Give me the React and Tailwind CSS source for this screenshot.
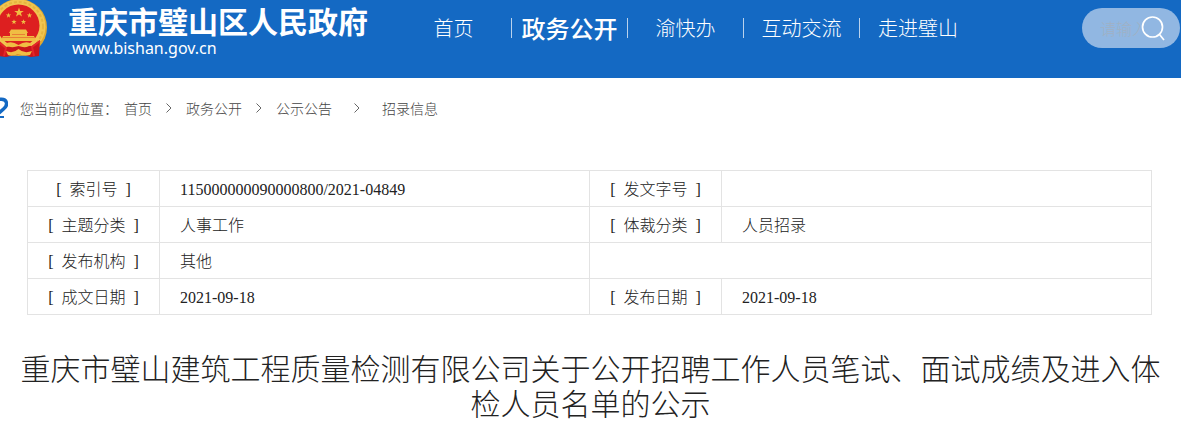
import { Fragment } from "react";

const NAV_ITEMS = ["首页", "政务公开", "渝快办", "互动交流", "走进璧山"];
const ACTIVE_ITEM = "政务公开";
const CRUMBS = ["首页", "政务公开", "公示公告", "招录信息"];

const INFO_ROWS = [
  ["索引号", "115000000090000800/2021-04849", "发文字号", ""],
  ["主题分类", "人事工作", "体裁分类", "人员招录"],
  ["发布机构", "其他", null, null],
  ["成文日期", "2021-09-18", "发布日期", "2021-09-18"],
];

const STAR = "M0-5 1.2-1.6 4.8-1.6 1.9.6 3 4 0 1.9-3 4-1.9.6-4.8-1.6-1.2-1.6Z";

function Emblem() {
  return (
    <svg viewBox="0 0 48 60" className="h-[60px] w-12 shrink-0" aria-hidden="true">
      <circle cx="18.500" cy="27.500" r="28.500" fill="#dfaa30" />
      <circle cx="18.500" cy="26.500" r="27" fill="#f0c550" />
      <circle cx="18.500" cy="26.500" r="24.500" fill="none" stroke="#e5b53f" strokeWidth="2" strokeDasharray="3 2" />
      <path d="M-1 41 6 47 19 45 32 46 40 40 39 56 31 57 19 54 6 57-1 56Z" fill="#c9151b" />
      <circle cx="18.500" cy="25.500" r="21" fill="#dd1f20" />
      <g fill="#f0bd43">
        <path d={STAR} transform="translate(19 12.500)" />
        <path d={STAR} transform="translate(8.500 15.500) scale(.55)" />
        <path d={STAR} transform="translate(29.500 15.500) scale(.55)" />
        <path d={STAR} transform="translate(14 22) scale(.55)" />
        <path d={STAR} transform="translate(23.500 22) scale(.55)" />
        <path d="M11 29.500H26L28 33H9ZM10 33H27V36H34L36 41H1L3 36H10Z" />
        <path d="M5 44Q11 40 18.500 45 26 40 32 44 27 49 18.500 46 10 49 5 44Z" />
        <path d="M6 51Q13 54 18.500 49 24 54 32 51L30 55Q24 57 18.500 54 12 57 8 55Z" />
      </g>
      <path d="M3 37.500H34M12 34.500H25" stroke="#dd1f20" strokeWidth=".4" />
      <path d="M-1 42 6 48 4 56M40 41 32 47 34 56" fill="none" stroke="#e3262a" strokeWidth="2" />
    </svg>
  );
}

function Header() {
  return (
    <header className="flex h-[78px] items-start bg-[#1469c3] text-white">
      <a href="#" className="flex shrink-0">
        <Emblem />
        <span className="ml-5 flex flex-col pt-1">
          <span className="text-[30px] leading-8 font-bold">重庆市璧山区人民政府</span>
          <span className="pl-1 font-['Noto_Sans','Open_Sans',sans-serif] text-base leading-6">www.bishan.gov.cn</span>
        </span>
      </a>
      <nav className="ml-7 flex shrink-0 pt-[18px]">
        {NAV_ITEMS.map((item) => (
          <a
            key={item}
            href="#"
            className={`flex h-5 w-29 items-center justify-center border-r border-white/70 last:border-r-0 ${
              item === ACTIVE_ITEM ? "text-2xl font-medium" : "text-xl font-light"
            }`}
          >
            {item}
          </a>
        ))}
      </nav>
      <form className="mt-2 mr-px ml-auto flex h-10 w-[98px] items-center rounded-full bg-[#91b7e2] pr-[14px] pl-[18px]">
        <input
          type="text"
          aria-label="请输入关键字"
          placeholder="请输入关键字"
          className="w-10 min-w-0 text-base font-light outline-none placeholder:text-[#a0b1c4]"
        />
        <button type="button" aria-label="搜索" className="shrink-0">
          <svg viewBox="0 0 26 26" className="size-[26px]" fill="none" stroke="white" strokeWidth="1.7">
            <circle cx="12.500" cy="12" r="10" />
            <path d="M19.500 19.500 24 25" />
          </svg>
        </button>
      </form>
    </header>
  );
}

function Breadcrumb() {
  return (
    <nav className="flex h-[60px] items-center text-sm font-light text-[#444]">
      <svg viewBox="0 0 8 22" className="h-[22px] w-2 shrink-0" fill="none" stroke="#1469c3">
        <path d="M-1 2.500C7.500 1 8.500 8 3.500 12L-1 16" strokeWidth="3.500" />
        <path d="M-1 20H4" strokeWidth="2" />
      </svg>
      <span className="mr-1.5 ml-3">您当前的位置：</span>
      {CRUMBS.map((crumb, index) => (
        <Fragment key={crumb}>
          {index > 0 && (
            <svg
              viewBox="0 0 6 10"
              className={index === 3 ? "mx-[22px] h-2.5 w-1.5" : "mx-[14px] h-2.5 w-1.5"}
              fill="none"
              stroke="#666"
            >
              <path d="M.5.5 5 5 .5 9.500" />
            </svg>
          )}
          <a href="#">{crumb}</a>
        </Fragment>
      ))}
    </nav>
  );
}

function Label({ children }) {
  return (
    <th scope="row" className="border border-[#e3e3e3] px-0 pt-0.5 pb-0 text-center font-light">
      <span className="flex justify-center gap-2">
        <span>[</span>
        <span>{children}</span>
        <span>]</span>
      </span>
    </th>
  );
}

function Value({ children }) {
  return <td className="border border-[#e3e3e3] px-5 pt-0.5 pb-0 font-light">{children}</td>;
}

function InfoTable() {
  return (
    <table className="w-full table-fixed border-collapse font-['Liberation_Serif','Noto_Sans_CJK_SC',serif] text-base leading-6 text-[#222]">
      <colgroup>
        <col className="w-[132px]" />
        <col />
        <col className="w-[132px]" />
        <col />
      </colgroup>
      <tbody>
        {INFO_ROWS.map(([label, value, otherLabel, otherValue]) => (
          <tr key={label} className="h-9">
            <Label>{label}</Label>
            <Value>{value}</Value>
            {otherLabel ? (
              <>
                <Label>{otherLabel}</Label>
                <Value>{otherValue}</Value>
              </>
            ) : (
              <td colSpan={2} className="border border-[#e3e3e3]" />
            )}
          </tr>
        ))}
      </tbody>
    </table>
  );
}

export default function App() {
  return (
    <div className="bg-white font-['Noto_Sans_CJK_SC',sans-serif]">
      <Header />
      <Breadcrumb />
      <main>
        <div className="pt-8 pr-[29px] pl-[27px]">
          <InfoTable />
        </div>
        <h1 className="px-5 pt-[35px] text-center text-[30px] leading-[35px] font-light text-[#222]">
          重庆市璧山建筑工程质量检测有限公司关于公开招聘工作人员笔试、面试成绩及进入体检人员名单的公示
        </h1>
      </main>
    </div>
  );
}
